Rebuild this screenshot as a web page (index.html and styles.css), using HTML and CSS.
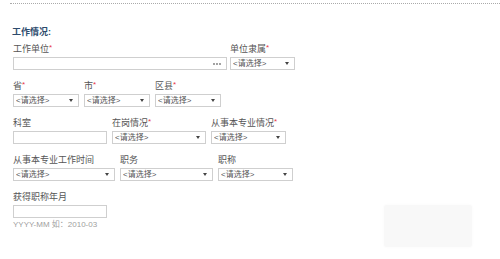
FILE: index.html
```html
<!DOCTYPE html>
<html lang="zh-CN">
<head>
  <meta charset="UTF-8">
  <title>工作情况</title>
  <link rel="stylesheet" href="styles.css">
</head>
<body>
  <div class="divider"></div>

  <div class="form">
    <h3 class="section-title">工作情况:</h3>

    <div class="row">
      <div class="field">
        <label>工作单位<em>*</em></label>
        <span class="picker">
          <input type="text" class="w-unit">
          <svg class="dots" width="8" height="2" viewBox="0 0 8 2">
            <circle cx="1" cy="1" r="0.9" fill="#777"/>
            <circle cx="4" cy="1" r="0.9" fill="#777"/>
            <circle cx="7" cy="1" r="0.9" fill="#777"/>
          </svg>
        </span>
      </div>
      <div class="field">
        <label>单位隶属<em>*</em></label>
        <span class="select w-65"><select><option>&lt;请选择&gt;</option></select></span>
      </div>
    </div>

    <div class="row">
      <div class="field">
        <label>省<em>*</em></label>
        <span class="select w-66"><select><option>&lt;请选择&gt;</option></select></span>
      </div>
      <div class="field">
        <label>市<em>*</em></label>
        <span class="select w-66"><select><option>&lt;请选择&gt;</option></select></span>
      </div>
      <div class="field">
        <label>区县<em>*</em></label>
        <span class="select w-66"><select><option>&lt;请选择&gt;</option></select></span>
      </div>
    </div>

    <div class="row">
      <div class="field">
        <label>科室</label>
        <input type="text" class="w-94">
      </div>
      <div class="field">
        <label>在岗情况<em>*</em></label>
        <span class="select w-94"><select><option>&lt;请选择&gt;</option></select></span>
      </div>
      <div class="field">
        <label>从事本专业情况<em>*</em></label>
        <span class="select w-75"><select><option>&lt;请选择&gt;</option></select></span>
      </div>
    </div>

    <div class="row">
      <div class="field">
        <label>从事本专业工作时间</label>
        <span class="select w-102"><select><option>&lt;请选择&gt;</option></select></span>
      </div>
      <div class="field">
        <label>职务</label>
        <span class="select w-93"><select><option>&lt;请选择&gt;</option></select></span>
      </div>
      <div class="field">
        <label>职称</label>
        <span class="select w-75"><select><option>&lt;请选择&gt;</option></select></span>
      </div>
    </div>

    <div class="row">
      <div class="field">
        <label>获得职称年月</label>
        <input type="text" class="w-94">
        <div class="hint">YYYY-MM 如：2010-03</div>
      </div>
    </div>
  </div>

  <div class="watermark"></div>
</body>
</html>
```

FILE: styles.css
```css
body {
  margin: 0;
  padding: 0;
  background: #fff;
  font-family: "Liberation Sans", "Noto Sans CJK SC", sans-serif;
  color: #555;
  font-size: 9px;
}
.divider {
  margin: 3px 0 0 10px;
  border-top: 1px dotted #aaa;
}
.form {
  padding: 0 0 0 13px;
}
.section-title {
  margin: 22px 0 5px -1px;
  font-size: 9px;
  line-height: 12px;
  font-weight: bold;
  color: #2d4b6d;
}
.row {
  display: flex;
  gap: 5px;
  margin-bottom: 10px;
}
.row:first-of-type {
  gap: 3px;
}
.field label {
  display: block;
  height: 12px;
  line-height: 12px;
  margin-bottom: 2px;
  color: #555;
  white-space: nowrap;
}
.field label em {
  font-style: normal;
  color: #e8374a;
  font-size: 8px;
  line-height: 0;
  vertical-align: 2px;
}
input[type="text"] {
  display: block;
  box-sizing: border-box;
  height: 13px;
  margin: 0;
  padding: 0 3px;
  border: 1px solid #cfcfcf;
  background: #fff;
  font-size: 8px;
  outline: none;
}
.picker {
  position: relative;
  display: block;
}
.picker .dots {
  position: absolute;
  right: 6px;
  top: 6px;
}
.select {
  position: relative;
  display: block;
}
.select select {
  display: block;
  width: 100%;
  box-sizing: border-box;
  height: 13px;
  margin: 0;
  padding: 0 0 0 2px;
  border: 1px solid #cfcfcf;
  border-radius: 0;
  background: #fff;
  -webkit-appearance: none;
  appearance: none;
  font-family: "Liberation Sans", "Noto Sans CJK SC", sans-serif;
  font-size: 8px;
  line-height: 11px;
  color: #555;
  outline: none;
}
.select::after {
  content: "";
  position: absolute;
  right: 6px;
  top: 5px;
  border-left: 2.5px solid transparent;
  border-right: 2.5px solid transparent;
  border-top: 3px solid #444;
  pointer-events: none;
}
.w-unit { width: 214px; }
.w-65 { width: 65px; }
.w-66 { width: 66px; }
.w-75 { width: 75px; }
.w-93 { width: 93px; }
.w-94 { width: 94px; }
.w-102 { width: 102px; }
.hint {
  margin-top: 2px;
  font-size: 8px;
  line-height: 10px;
  color: #a0a0a0;
}
.watermark {
  position: absolute;
  left: 384px;
  top: 205px;
  width: 88px;
  height: 42px;
  background: #f8f8f8;
  border-radius: 2px;
  box-shadow: 0 0 3px #f8f8f8;
}
```
